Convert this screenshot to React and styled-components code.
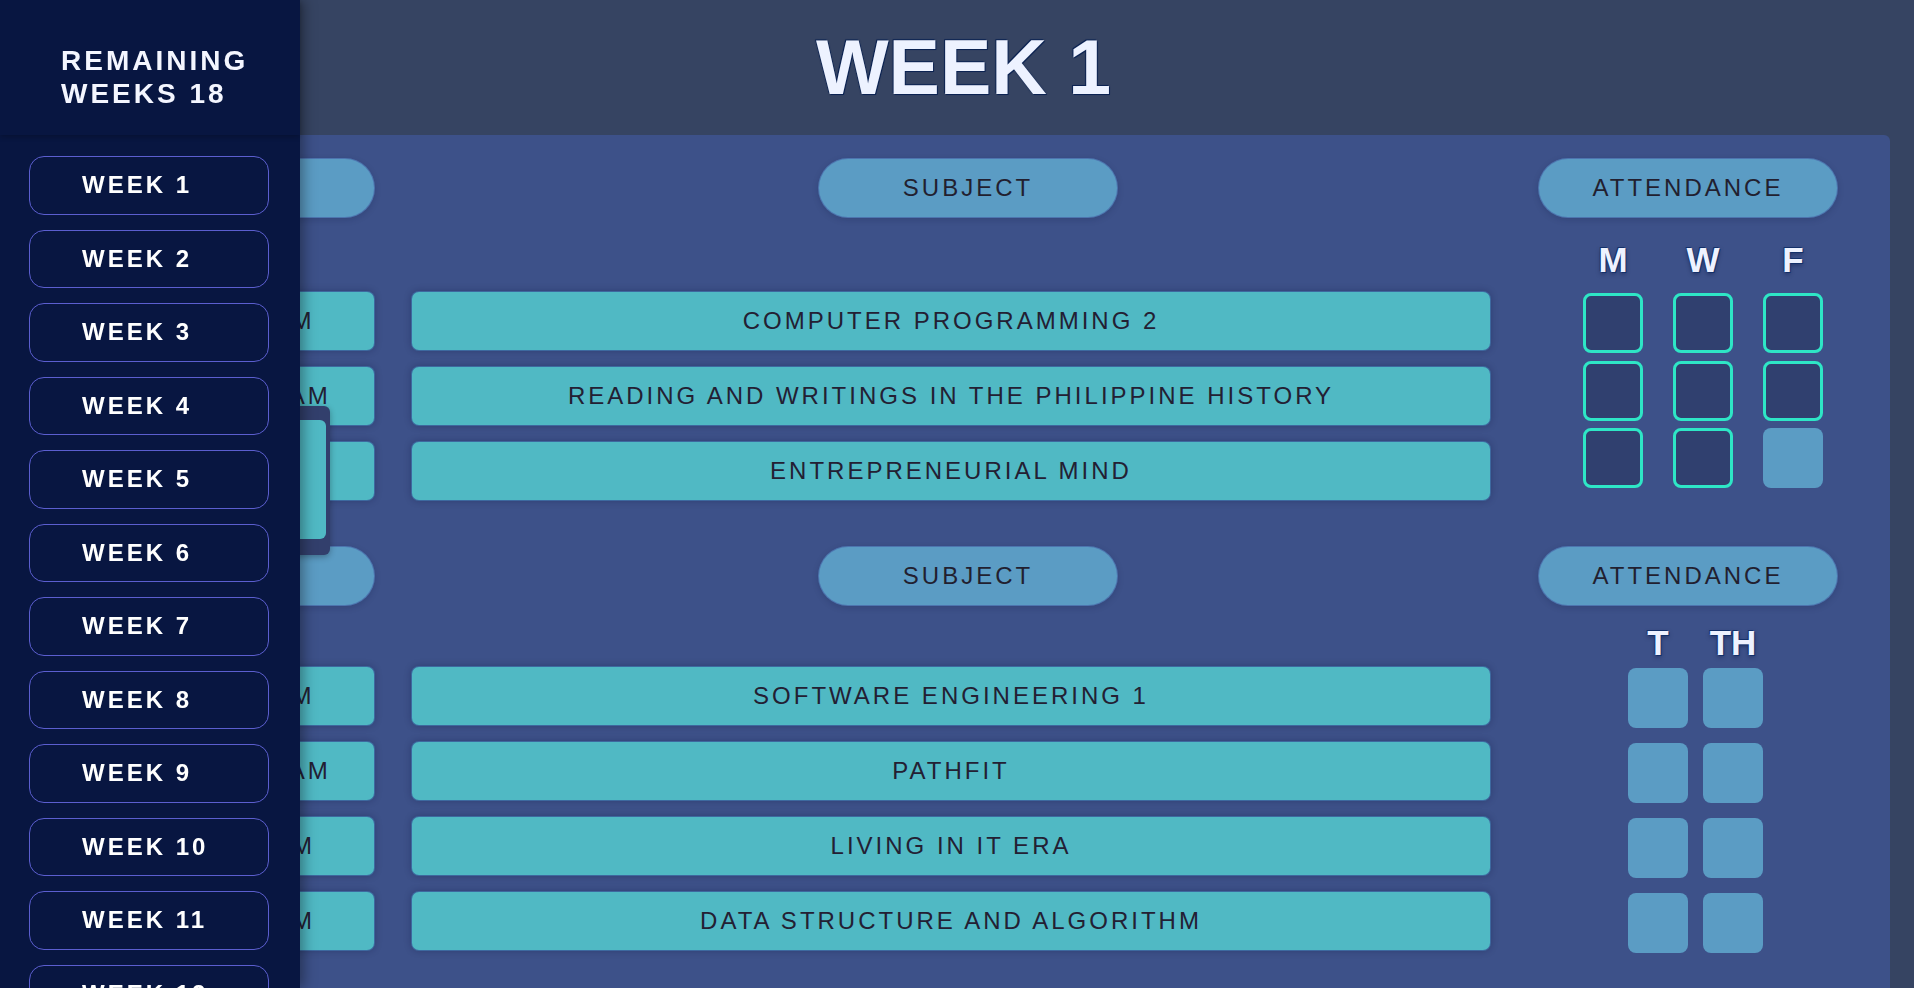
import React from "react";
import styled, { createGlobalStyle } from "styled-components";

const GlobalStyle = createGlobalStyle`
  * { box-sizing: border-box; }
  html, body { margin: 0; padding: 0; }
  body {
    background: #364462;
    font-family: "Liberation Sans", Arial, sans-serif;
    overflow: hidden;
  }
`;

const Page = styled.div`
  min-height: 100vh;
`;

const TopBar = styled.header`
  height: 135px;
  display: flex;
  align-items: center;
  justify-content: center;
  padding-left: 13px;
`;

const Title = styled.h1`
  margin: 0;
  font-size: 77px;
  line-height: 1;
  font-weight: 700;
  color: #edf2ff;
  text-shadow: -1px -1px 0 #0c2352, 1px 1px 0 #0c2352, 0 0 2px #0c2352;
`;

const Panel = styled.main`
  position: relative;
  margin: 0 24px;
  background: #3d5189;
  border-radius: 6px;
  padding: 23px 52px 80px 51px;
  display: flex;
  flex-direction: column;
  gap: 45px;
`;

const Section = styled.section`
  display: flex;
  flex-direction: column;
`;

const HeaderRow = styled.div`
  display: grid;
  grid-template-columns: 300px 443px 300px 1fr 300px;
`;

const Pill = styled.div`
  grid-column: ${(p) => p.$col};
  height: 60px;
  border-radius: 30px;
  background: #5b9cc4;
  border: 1px solid rgba(60, 70, 150, 0.45);
  box-shadow: 0 2px 6px rgba(10, 20, 60, 0.18);
  display: flex;
  align-items: center;
  justify-content: center;
  font-size: 24px;
  letter-spacing: 3px;
  color: #221f30;
`;

const Body = styled.div`
  display: flex;
`;

const Rows = styled.div`
  display: grid;
  grid-template-columns: 300px 1080px;
  column-gap: 36px;
  row-gap: 15px;
  align-content: start;
  padding-top: ${(p) => p.$top}px;
`;

const Cell = styled.div`
  height: 60px;
  border-radius: 8px;
  background: #50b9c4;
  border: 1px solid rgba(45, 40, 130, 0.55);
  box-shadow: 0 0 7px rgba(15, 20, 60, 0.3);
  display: flex;
  align-items: center;
  justify-content: center;
  font-size: 24px;
  letter-spacing: 3px;
  color: #232033;
  white-space: nowrap;
  overflow: hidden;
`;

const Attendance = styled.div`
  flex: 1;
  margin-left: 37px;
  padding-top: ${(p) => p.$top}px;
  padding-left: ${(p) => p.$indent}px;
  display: flex;
  flex-direction: column;
  align-items: flex-start;
`;

const DayLabels = styled.div`
  display: grid;
  grid-template-columns: repeat(${(p) => p.$cols}, 60px);
  column-gap: ${(p) => p.$colGap}px;
`;

const DayLabel = styled.div`
  font-size: 35px;
  line-height: 36px;
  font-weight: 700;
  text-align: center;
  white-space: nowrap;
  color: #eef2ff;
  text-shadow: -1px -1px 0 #13306a, 1px 1px 0 #13306a, 0 2px 4px rgba(10, 20, 60, 0.5);
`;

const BoxGrid = styled.div`
  display: grid;
  grid-template-columns: repeat(${(p) => p.$cols}, 60px);
  row-gap: ${(p) => p.$rowGap}px;
  column-gap: ${(p) => p.$colGap}px;
  margin-top: ${(p) => p.$top}px;
`;

const Box = styled.div`
  width: 60px;
  height: 60px;
  border-radius: 8px;
  background: ${(p) => (p.$off ? "#5b9cc4" : "#30406f")};
  border: ${(p) => (p.$off ? "none" : "3px solid #2ee6c6")};
`;

const Handle = styled.div`
  position: absolute;
  left: 246px;
  top: 271px;
  width: 60px;
  height: 149px;
  background: #323f6c;
  border-radius: 6px;
  padding: 14px 4px 16px 4px;
  box-shadow: 0 2px 6px rgba(0, 0, 0, 0.3);
  z-index: 5;
`;

const HandleBar = styled.div`
  height: 100%;
  background: #50b9c4;
  border-radius: 6px;
`;

const Sidebar = styled.aside`
  position: fixed;
  top: 0;
  left: 0;
  width: 300px;
  height: 100vh;
  background: #081641;
  z-index: 20;
  display: flex;
  flex-direction: column;
  box-shadow: 4px 0 12px rgba(0, 0, 0, 0.35);
`;

const SideHead = styled.div`
  height: 135px;
  flex-shrink: 0;
  padding: 44px 0 0 61px;
  font-size: 28px;
  line-height: 33px;
  font-weight: 700;
  letter-spacing: 3px;
  color: #f4f6ff;
  position: relative;
  z-index: 1;
  box-shadow: 0 2px 5px rgba(0, 0, 0, 0.22);
`;

const WeekList = styled.nav`
  flex: 1;
  overflow: hidden;
  padding: 21px 0 0 29px;
  display: flex;
  flex-direction: column;
  gap: 15px;
`;

const WeekButton = styled.button`
  flex-shrink: 0;
  width: 240px;
  height: 58.5px;
  border: 1px solid #5b5ecf;
  border-radius: 15px;
  background: transparent;
  color: #ffffff;
  font-family: "Liberation Sans", Arial, sans-serif;
  font-size: 24px;
  font-weight: 700;
  letter-spacing: 3px;
  text-align: left;
  padding: 0 0 0 52px;
  cursor: pointer;
`;

const mwfRows = [
  { time: "7:30-9:00 AM", subject: "COMPUTER PROGRAMMING 2" },
  { time: "09:00-10:30 AM", subject: "READING AND WRITINGS IN THE PHILIPPINE HISTORY" },
  { time: "1:00-2:30 PM", subject: "ENTREPRENEURIAL MIND" },
];

const tthRows = [
  { time: "7:30-9:00 AM", subject: "SOFTWARE ENGINEERING 1" },
  { time: "09:00-10:30 AM", subject: "PATHFIT" },
  { time: "1:00-2:30 PM", subject: "LIVING IN IT ERA" },
  { time: "2:30-4:00 PM", subject: "DATA STRUCTURE AND ALGORITHM" },
];

function ScheduleSection({ rows, days, rowsTop, attTop, indent, colGap, rowGap, gridTop, offSet }) {
  return (
    <Section>
      <HeaderRow>
        <Pill $col={1}>TIME</Pill>
        <Pill $col={3}>SUBJECT</Pill>
        <Pill $col={5}>ATTENDANCE</Pill>
      </HeaderRow>
      <Body>
        <Rows $top={rowsTop}>
          {rows.map((r) => (
            <React.Fragment key={r.subject}>
              <Cell>{r.time}</Cell>
              <Cell>{r.subject}</Cell>
            </React.Fragment>
          ))}
        </Rows>
        <Attendance $top={attTop} $indent={indent}>
          <DayLabels $cols={days.length} $colGap={colGap}>
            {days.map((d) => (
              <DayLabel key={d}>{d}</DayLabel>
            ))}
          </DayLabels>
          <BoxGrid $cols={days.length} $colGap={colGap} $rowGap={rowGap} $top={gridTop}>
            {rows.map((r, ri) =>
              days.map((d, di) => (
                <Box key={r.subject + d} $off={offSet(ri, di)} />
              ))
            )}
          </BoxGrid>
        </Attendance>
      </Body>
    </Section>
  );
}

export default function App() {
  const weeks = Array.from({ length: 18 }, (_, i) => i + 1);
  return (
    <Page>
      <GlobalStyle />
      <Sidebar>
        <SideHead>REMAINING WEEKS 18</SideHead>
        <WeekList>
          {weeks.map((w) => (
            <WeekButton key={w}>WEEK {w}</WeekButton>
          ))}
        </WeekList>
      </Sidebar>
      <TopBar>
        <Title>WEEK 1</Title>
      </TopBar>
      <Panel>
        <Handle>
          <HandleBar />
        </Handle>
        <ScheduleSection
          rows={mwfRows}
          days={["M", "W", "F"]}
          rowsTop={73}
          attTop={24}
          indent={55}
          colGap={30}
          rowGap={7.5}
          gridTop={15}
          offSet={(ri, di) => ri === 2 && di === 2}
        />
        <ScheduleSection
          rows={tthRows}
          days={["T", "TH"]}
          rowsTop={60}
          attTop={19}
          indent={100}
          colGap={15}
          rowGap={15}
          gridTop={7}
          offSet={() => true}
        />
      </Panel>
    </Page>
  );
}
